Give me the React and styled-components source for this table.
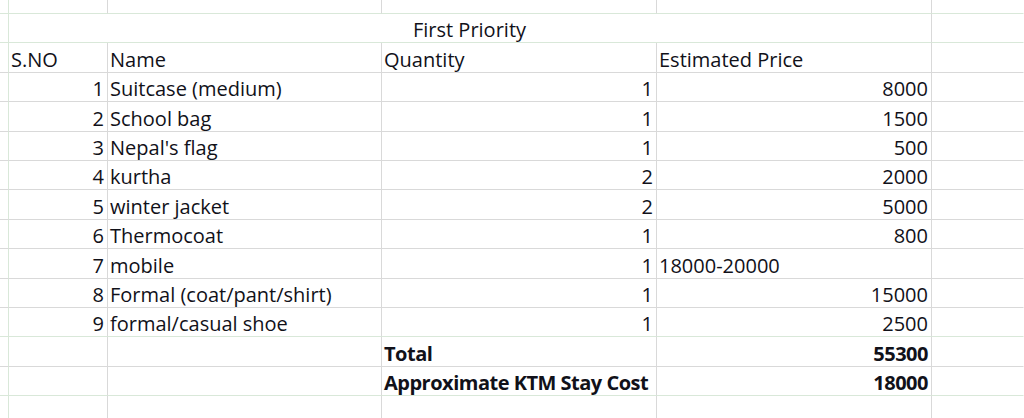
import React from 'react';
import styled, { createGlobalStyle } from 'styled-components';

const GRID = '#d9d9d9';
const GREEN = '#d9e8d9';

const items = [
  [1, 'Suitcase (medium)', 1, '8000'],
  [2, 'School bag', 1, '1500'],
  [3, "Nepal's flag", 1, '500'],
  [4, 'kurtha', 2, '2000'],
  [5, 'winter jacket', 2, '5000'],
  [6, 'Thermocoat', 1, '800'],
  [7, 'mobile', 1, '18000-20000', true],
  [8, 'Formal (coat/pant/shirt)', 1, '15000'],
  [9, 'formal/casual shoe', 1, '2500'],
];

const Global = createGlobalStyle`
  body {
    margin: 0;
    background: #fff;
  }
`;

const Sheet = styled.div`
  width: 1024px;
  height: 418px;
  overflow: hidden;
  display: flex;
  flex-direction: column;
  font-family: "Open Sans", Lato, sans-serif;
  font-size: 20px;
  color: #111119;
`;

const Row = styled.div`
  display: grid;
  grid-template-columns: 9px 99px 274px 275px 275px 1fr;
  height: ${(p) => p.$h}px;
  flex-shrink: 0;
  & > div {
    border-bottom: 1px solid ${(p) => (p.$green ? GREEN : GRID)};
  }
`;

const Cell = styled.div`
  display: flex;
  align-items: flex-end;
  justify-content: ${(p) => (p.$center ? 'center' : p.$right ? 'flex-end' : 'flex-start')};
  grid-column: ${(p) => (p.$span ? `span ${p.$span}` : 'auto')};
  border-right: 1px solid ${(p) => (p.$edge ? GREEN : p.$last ? 'transparent' : GRID)};
  padding: 0 3px 2px 2px;
  line-height: 1;
  font-weight: ${(p) => (p.$bold ? 700 : 400)};
  letter-spacing: ${(p) => (p.$bold ? '-0.5px' : 'normal')};
  white-space: nowrap;
  overflow: visible;
`;

const Line = ({ h = 29.4, green, children }) => (
  <Row $h={h} $green={green}>
    <Cell $edge />
    {children}
    <Cell $last />
  </Row>
);

export default function App() {
  return (
    <>
      <Global />
      <Sheet>
        <Line h={14} green>
          <Cell />
          <Cell />
          <Cell />
          <Cell />
        </Line>
        <Line h={29.4} green>
          <Cell $span={4} $center>First Priority</Cell>
        </Line>
        <Line>
          <Cell>S.NO</Cell>
          <Cell>Name</Cell>
          <Cell>Quantity</Cell>
          <Cell>Estimated Price</Cell>
        </Line>
        {items.map(([no, name, qty, price, left], i) => (
          <Line key={no} green={i === items.length - 1}>
            <Cell $right>{no}</Cell>
            <Cell>{name}</Cell>
            <Cell $right>{qty}</Cell>
            <Cell $right={!left}>{price}</Cell>
          </Line>
        ))}
        <Line>
          <Cell />
          <Cell />
          <Cell $bold>Total</Cell>
          <Cell $right $bold>55300</Cell>
        </Line>
        <Line green>
          <Cell />
          <Cell />
          <Cell $bold>Approximate KTM Stay Cost</Cell>
          <Cell $right $bold>18000</Cell>
        </Line>
        <Line h={30}>
          <Cell />
          <Cell />
          <Cell />
          <Cell />
        </Line>
      </Sheet>
    </>
  );
}
